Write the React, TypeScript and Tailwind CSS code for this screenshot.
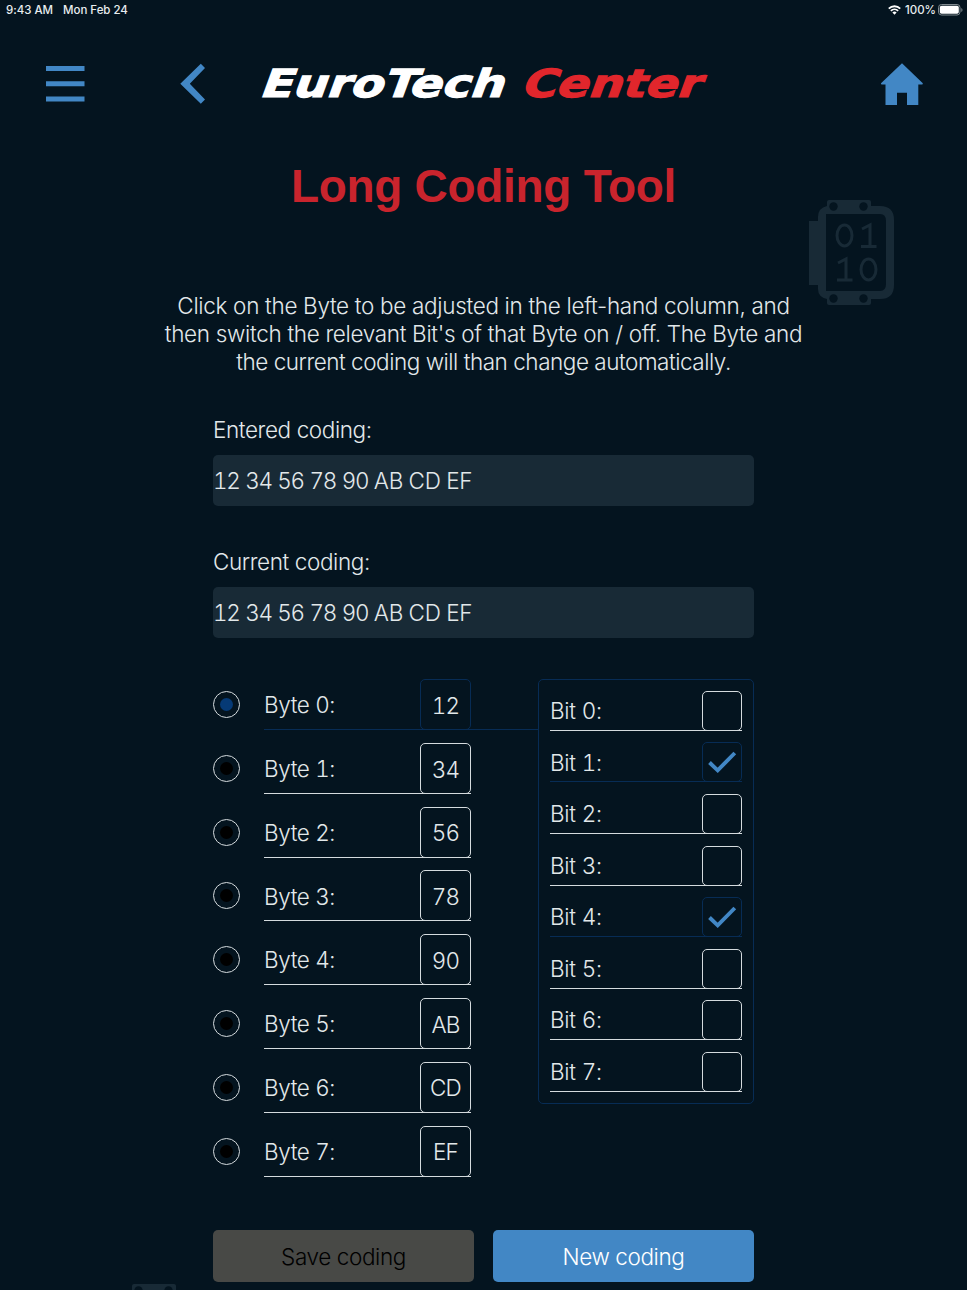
import React from "react";

const bytes = ["12", "34", "56", "78", "90", "AB", "CD", "EF"];
const bits = [false, true, false, false, true, false, false, false];

function StatusBar() {
  return (
    <div className="flex h-5 items-center justify-between pl-1.5 pr-[5px] text-[11.5px] font-medium leading-5 tracking-[-0.03px] text-[#e8edef]">
      <div className="flex gap-2.5">
        <span>9:43 AM</span>
        <span>Mon Feb 24</span>
      </div>
      <div className="-mr-px flex items-center">
        <svg width="13" height="10" viewBox="0 0 13 10" fill="none" stroke="#fff" strokeWidth="1.9">
          <path d="M.8 3.600a8.100 8.100 0 0 1 11.400 0M2.900 5.900a5.100 5.100 0 0 1 7.200 0" />
          <path d="M4.400 7.500a3 3 0 0 1 4.200 0L6.500 9.700z" fill="#fff" stroke="none" />
        </svg>
        <span className="ml-1 mr-[2px]">100%</span>
        <svg width="25" height="12" viewBox="0 0 25 12">
          <rect x=".5" y=".5" width="21.5" height="10.5" rx="3" fill="none" stroke="#7f898e" />
          <rect x="1.8" y="1.8" width="19" height="8" rx="1.8" fill="#fff" />
          <path d="M23.3 4v4q1.2-.6 1.2-2t-1.2-2z" fill="#7f898e" />
        </svg>
      </div>
    </div>
  );
}

function Logo() {
  return (
    <svg width="450" height="44" viewBox="0 0 450 44" className="shrink-0 overflow-visible">
      <g fontFamily="'DejaVu Sans', sans-serif" fontWeight="700" fontSize="38.5" strokeWidth="1.2" transform="translate(0 35.3) skewX(-20)">
        <text x="-2.5" y="0" fill="#fff" stroke="#fff" textLength="244" lengthAdjust="spacingAndGlyphs">EuroTech</text>
        <text x="259" y="0" fill="#e1262c" stroke="#e1262c" textLength="179" lengthAdjust="spacingAndGlyphs">Center</text>
      </g>
    </svg>
  );
}

function Header() {
  return (
    <header className="flex h-[128px] items-center pl-[46px] pr-[44px]">
      <svg width="39" height="36" viewBox="0 0 39 36" fill="#4287c5">
        <path d="M0 0h38.500v5H0zM0 15.300h38.500v5H0zM0 30.600h38.500v5H0z" />
      </svg>
      <svg width="25" height="42" viewBox="0 0 25 42" className="ml-[95px]" fill="#4287c5">
        <path d="M20.800.8l4.200 4.300L9.800 20.800 25 36.500l-4.200 4.300L.3 20.800z" />
      </svg>
      <div className="ml-[56px]">
        <Logo />
      </div>
      <svg width="43" height="43" viewBox="0 0 43 43" className="ml-auto" fill="#4287c5">
        <path d="M22 .3L42.800 20.200q.2 1.400-1 1.300H38.300V42H27V29.700H17V42H5.500V21.500H2q-1.400 0-1-1.300z" />
      </svg>
    </header>
  );
}

function Chip({ className }: { className: string }) {
  return (
    <svg width="87" height="106" viewBox="0 0 87 106" className={className}>
      <g fill="#182a36">
        <path d="M1 21h10v64H1zM21 0h40q2 0 2 2v4h9q14 0 14 14v65q0 14-14 14h-9v4q0 2-2 2H21q-2 0-2-2v-4q-9-2-9-10V17q0-9 9-11V2q0-2 2-2z" />
      </g>
      <path d="M18 14h54q6 0 6 7v63q0 7-6 7H18z" fill="#04141f" />
      <g fill="#04141f">
        <circle cx="25.5" cy="6.5" r="4.2" />
        <circle cx="55.5" cy="6.5" r="4.2" />
        <circle cx="25.5" cy="98.5" r="4.2" />
        <circle cx="55.5" cy="98.5" r="4.2" />
      </g>
      <g fill="none" stroke="#182a36" strokeWidth="3">
        <ellipse cx="36.5" cy="35.500" rx="7.500" ry="10.500" />
        <path d="M54 29l8-4v21.500M53 46.500h15.500" />
        <path d="M30 63l8-4v21M29 80h15.500" />
        <ellipse cx="60.500" cy="69.500" rx="7.500" ry="10.500" />
      </g>
    </svg>
  );
}

function CodingField({ label }: { label: string }) {
  return (
    <div>
      <div className="h-[40px] leading-[29px] tracking-[-0.4px]">{label}</div>
      <div className="flex h-[51px] items-center rounded-[5px] bg-[#182a36] tabular-nums">
        <span className="whitespace-pre tracking-[-1.33px] [word-spacing:1px]">{bytes.slice(0, 5).join(" ") + " "}</span>
        <span className="tracking-[-0.35px]">{bytes.slice(5).join(" ")}</span>
      </div>
    </div>
  );
}

function ByteRow({ index, value, selected }: { index: number; value: string; selected: boolean }) {
  const line = selected ? "border-[#072c55]" : "border-[#d5dbde]";
  return (
    <div className="flex h-[63.8px] items-start">
      <div className="mt-3 flex size-[27px] items-center justify-center rounded-full border border-[#d5dbde]">
        <span className={"size-[13px] rounded-full " + (selected ? "bg-[#063a76]" : "bg-black")} />
      </div>
      <div className={"ml-6 flex h-[51px] w-[207px] items-center justify-between border-b " + line}>
        <span className="pt-0.5 tracking-[-0.38px] tabular-nums">Byte {index}:</span>
        <span className={"-mb-px flex size-[51px] items-center justify-center rounded-[5px] border pt-0.5 tracking-[-0.9px] tabular-nums " + line}>
          {value}
        </span>
      </div>
      {selected && <div className="mt-[50px] h-px flex-1 bg-[#072c55]" />}
    </div>
  );
}

function BitRow({ index, on }: { index: number; on: boolean }) {
  const line = on ? "border-[#072c55]" : "border-[#d5dbde]";
  return (
    <div className="h-[51.6px]">
      <div className={"flex h-10 items-center justify-between border-b " + line}>
        <span className="pt-px tracking-[-0.25px] tabular-nums">Bit {index}:</span>
        <span className={"-mb-px flex size-10 items-center justify-center rounded-[5px] border " + line}>
          {on && (
            <svg width="30" height="22" viewBox="0 0 30 22" fill="none" stroke="#4287c5" strokeWidth="3.9">
              <path d="M2.500 11.500l8.200 7.800L27.800 2" />
            </svg>
          )}
        </span>
      </div>
    </div>
  );
}

export default function App() {
  return (
    <div className="relative h-[1290px] w-[967px] overflow-hidden bg-[#04141f] font-['Inter',sans-serif] font-light text-[#e2e8ea]">
      <StatusBar />
      <Header />
      <Chip className="absolute left-[808px] top-[200px]" />
      <Chip className="absolute left-[113px] top-[1284px]" />
      <h1 className="mt-[10px] text-center font-['Liberation_Sans',sans-serif] text-[46px] font-bold leading-[56px] tracking-[-0.3px] text-[#c9242d]">
        Long Coding Tool
      </h1>
      <p className="mt-[78px] text-center text-[22.5px] leading-[27.8px] tracking-[-0.32px]">
        Click on the Byte to be adjusted in the left-hand column, and
        <br />
        then switch the relevant Bit's of that Byte on / off. The Byte and
        <br />
        <span className="tracking-[-0.47px]">the current coding will than change automatically.</span>
      </p>
      <main className="mx-auto mt-[40px] w-[541px] text-[22.5px]">
        <div className="flex flex-col gap-[41px]">
          <CodingField label="Entered coding:" />
          <CodingField label="Current coding:" />
        </div>
        <div className="mt-[40.4px] flex items-start">
          <div className="w-[325px] pt-[0.3px]">
            {bytes.map((value, i) => (
              <ByteRow key={value} index={i} value={value} selected={i === 0} />
            ))}
          </div>
          <div className="h-[425px] w-[216px] rounded-[5px] border border-[#072c55] px-[11px] pt-[11px]">
            {bits.map((on, i) => (
              <BitRow key={i} index={i} on={on} />
            ))}
          </div>
        </div>
        <div className="mt-[40.3px] flex gap-[19px]">
          <button className="h-[52px] w-[261px] rounded-[5px] bg-[#484946] pt-0.5 tracking-[-0.4px] text-black">Save coding</button>
          <button className="h-[52px] w-[261px] rounded-[5px] bg-[#4287c5] pt-0.5 tracking-[-0.4px] text-white">New coding</button>
        </div>
      </main>
    </div>
  );
}
